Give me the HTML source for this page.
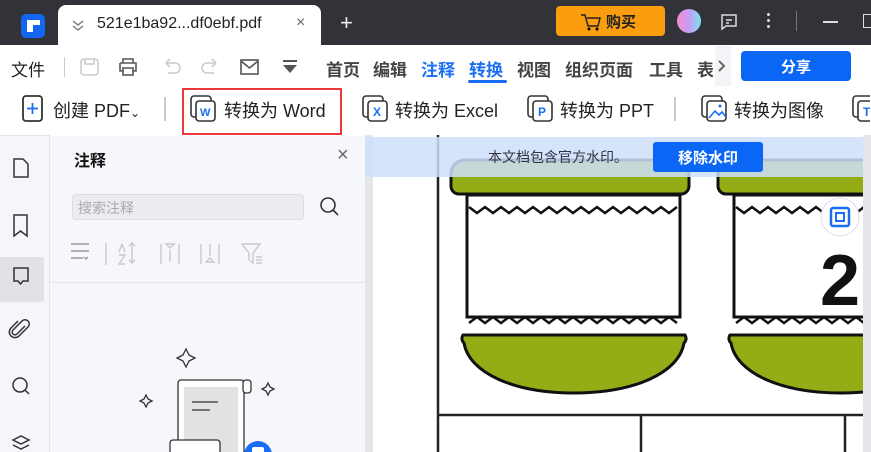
<!DOCTYPE html>
<html><head><meta charset="utf-8"><style>
*{margin:0;padding:0;box-sizing:border-box}
body{width:871px;height:452px;overflow:hidden;position:relative;background:#fff;font-family:"Liberation Sans","Noto Sans CJK SC",sans-serif;color:#222}
.a{position:absolute}
.t{white-space:nowrap}
.m{position:absolute;top:56px;font-size:17px;font-weight:bold;color:#444;white-space:nowrap}
</style></head><body>
<!-- title bar -->
<div class="a" style="left:0;top:0;width:871px;height:45px;background:#313338"></div>
<div class="a" style="top:14px;left:21px;width:24px;height:24px;background:#1266f1;border-radius:5px"></div>
<div class="a" style="left:27px;top:20px;width:13px;height:5px;background:#fff"></div>
<div class="a" style="left:27px;top:25px;width:6px;height:7px;background:#fff"></div>
<div class="a" style="left:58px;top:5px;width:263px;height:40px;background:#fff;border-radius:8px 8px 0 0"></div>
<svg class="a" style="left:71px;top:18px" width="14" height="14" fill="none" stroke="#777" stroke-width="1.4"><path d="M2 3l5 4 5-4M2 8l5 4 5-4"/></svg>
<div class="a t" style="left:97px;top:15px;font-size:16px;color:#222">521e1ba92...df0ebf.pdf</div>
<div class="a t" style="left:296px;top:14px;font-size:16px;color:#666">×</div>
<div class="a t" style="left:340px;top:10px;font-size:22px;color:#eee">+</div>
<div class="a" style="left:556px;top:6px;width:109px;height:30px;background:#fa9d0f;border-radius:4px"></div>
<svg class="a" style="left:580px;top:12px" width="22" height="20"><path d="M1 3h4l3 11h10l2-8H7" fill="none" stroke="#222" stroke-width="1.5"/><circle cx="9" cy="17" r="1.5"/><circle cx="17" cy="17" r="1.5"/></svg>
<div class="a t" style="left:606px;top:11px;font-size:15px;font-weight:bold;color:#222">购买</div>
<div class="a" style="left:677px;top:9px;width:24px;height:24px;border-radius:50%;background:linear-gradient(90deg,#f58bd0,#c69cf5,#7be4f0)"></div>
<svg class="a" style="left:720px;top:13px" width="18" height="18"><path d="M2 2h14v11H6l-4 3z" fill="none" stroke="#ddd" stroke-width="1.5"/><path d="M6 7h6M6 10h3" stroke="#ddd" stroke-width="1.5"/></svg>
<div class="a" style="left:767px;top:13px;width:3px;height:3px;background:#ddd;border-radius:50%;box-shadow:0 6px #ddd,0 12px #ddd"></div>
<div class="a" style="left:796px;top:11px;width:1px;height:20px;background:#777"></div>
<div class="a" style="left:823px;top:21px;width:15px;height:1.5px;background:#ddd"></div>
<div class="a" style="left:863px;top:14px;width:14px;height:14px;border:1.5px solid #ddd"></div>
<!-- menu row -->
<div class="a t" style="left:11px;top:56px;font-size:17px">文件</div>
<div class="a" style="left:64px;top:57px;width:1px;height:20px;background:#ccc"></div>
<svg class="a" style="left:80px;top:57px" width="220" height="20" fill="none" stroke-width="1.6">
<rect x="1" y="2" width="17" height="16" rx="3" stroke="#ccc"/><path d="M5 2v5h9V2" stroke="#ccc"/>
<path d="M43 6V2h10v4M40 6h16v8h-3M43 14h-3V6M43 11h10v7H43z" stroke="#555"/>
<path d="M86 6h9a5 5 0 010 10h-7M86 6l4-4M86 6l4 4" stroke="#ccc"/>
<path d="M136 6h-9a5 5 0 000 10h7M136 6l-4-4M136 6l-4 4" stroke="#ccc"/>
<rect x="161" y="3" width="17" height="14" stroke="#555"/><path d="M161 4l8.5 7 8.5-7" stroke="#555"/>
<path d="M203 4h14" stroke="#555" stroke-width="2"/><path d="M203 8h14l-7 8z" fill="#555" stroke="none"/>
</svg>
<div class="m" style="left:326px">首页</div>
<div class="m" style="left:373px">编辑</div>
<div class="m" style="left:421px;color:#1a6ef5">注释</div>
<div class="m" style="left:469px;color:#1a6ef5">转换</div>
<div class="m" style="left:517px">视图</div>
<div class="m" style="left:565px">组织页面</div>
<div class="m" style="left:649px">工具</div>
<div class="m" style="left:697px">表</div>
<div class="a" style="left:468px;top:80px;width:39px;height:3px;background:#1a6ef5;border-radius:2px"></div>
<div class="a" style="left:715px;top:46px;width:16px;height:40px;background:#f2f4f8"></div>
<svg class="a" style="left:716px;top:59px" width="12" height="14" fill="none" stroke="#666" stroke-width="2"><path d="M3 2l5 5-5 5"/></svg>
<div class="a" style="left:741px;top:51px;width:110px;height:30px;background:#0a66f5;border-radius:4px"></div>
<div class="a t" style="left:781px;top:56px;font-size:15px;color:#fff;font-weight:bold">分享</div>
<!-- ribbon -->
<svg class="a" style="left:22px;top:95px" width="22" height="28" fill="none" stroke-width="1.8"><rect x="1" y="1" width="19" height="25" rx="3" stroke="#333"/><path d="M10.5 8v11M5 13.5h11" stroke="#1a6ef5"/></svg>
<div class="a t" style="left:53px;top:97px;font-size:18px">创建 PDF<span style="font-size:12px">⌄</span></div>
<div class="a" style="left:164px;top:97px;width:1.5px;height:24px;background:#ccc"></div>
<div class="a" style="left:182px;top:88px;width:160px;height:47px;border:2px solid #e83a3a"></div>
<div class="a t" style="left:224px;top:97px;font-size:18px">转换为 Word</div>
<div class="a t" style="left:395px;top:97px;font-size:18px">转换为 Excel</div>
<div class="a t" style="left:560px;top:97px;font-size:18px">转换为 PPT</div>
<div class="a" style="left:674px;top:97px;width:1.5px;height:24px;background:#ccc"></div>
<div class="a t" style="left:734px;top:97px;font-size:18px">转换为图像</div>
<svg class="a" style="left:190px;top:94px" width="680" height="30" fill="none" stroke="#333" stroke-width="1.6">
<g><rect x="1" y="2" width="20" height="21" rx="3"/><rect x="6" y="7" width="19" height="20" rx="3" fill="#fff"/><text x="10" y="22" font-size="11" fill="#1a6ef5" stroke="none" font-weight="bold" font-family="Liberation Sans">W</text></g>
<g transform="translate(172,0)"><rect x="1" y="2" width="20" height="21" rx="3"/><rect x="6" y="7" width="19" height="20" rx="3" fill="#fff"/><text x="11" y="22" font-size="12" fill="#1a6ef5" stroke="none" font-weight="bold" font-family="Liberation Sans">X</text></g>
<g transform="translate(337,0)"><rect x="1" y="2" width="20" height="21" rx="3"/><rect x="6" y="7" width="19" height="20" rx="3" fill="#fff"/><text x="11" y="22" font-size="12" fill="#1a6ef5" stroke="none" font-weight="bold" font-family="Liberation Sans">P</text></g>
<g transform="translate(511,0)"><rect x="1" y="2" width="20" height="21" rx="3"/><rect x="6" y="7" width="19" height="20" rx="3" fill="#fff"/><path d="M8 24l6-7 4 4 3-3 4 5" stroke="#1a6ef5"/><circle cx="19" cy="12" r="1.5" fill="#1a6ef5" stroke="none"/></g>
<g transform="translate(662,0)"><rect x="1" y="2" width="20" height="21" rx="3"/><rect x="6" y="7" width="19" height="20" rx="3" fill="#fff"/><text x="11" y="22" font-size="12" fill="#1a6ef5" stroke="none" font-weight="bold" font-family="Liberation Sans">T</text></g>
</svg>
<!-- left strip -->
<div class="a" style="left:0;top:135px;width:50px;height:317px;background:#f5f6fa;border-right:1px solid #e3e5ea;border-top:1px solid #e3e5ea"></div>
<div class="a" style="left:0;top:257px;width:44px;height:45px;background:#e1e2e6;border-radius:0 3px 3px 0"></div>
<svg class="a" style="left:8px;top:155px" width="30" height="297" fill="none" stroke="#333" stroke-width="1.5">
<path d="M6 4h9l5 5v13H6z"/>
<path d="M6 60h13v21l-6.5-5-6.5 5z"/>
<path d="M6 113h14v13h-5l-2.5 3-2.5-3H6z"/>
<path d="M17 171l-8 8a2.5 2.5 0 01-4-4l9-9a4 4 0 016 6l-9 9a5.5 5.5 0 01-8-8l7-7"/>
<circle cx="12" cy="230" r="7"/><path d="M17 235l4 4"/>
<path d="M5 285l8-4 8 4-8 4z M5 290l8 4 8-4"/>
</svg>
<!-- panel -->
<div class="a" style="left:50px;top:136px;width:315px;height:316px;background:#f6f7fb"></div>
<div class="a t" style="left:74px;top:147px;font-size:16px;font-weight:bold;color:#111">注释</div>
<div class="a t" style="left:337px;top:144px;font-size:20px;color:#666">×</div>
<div class="a" style="left:72px;top:194px;width:232px;height:26px;background:#ebecf0;border:1px solid #dcdde2;border-radius:4px"></div>
<div class="a t" style="left:78px;top:198px;font-size:14px;color:#aaa">搜索注释</div>
<svg class="a" style="left:318px;top:195px" width="24" height="24" fill="none" stroke="#333" stroke-width="1.6"><circle cx="10" cy="10" r="7"/><path d="M15 15l5 5"/></svg>
<svg class="a" style="left:70px;top:240px" width="200" height="28" fill="none" stroke="#c8c9ce" stroke-width="1.4">
<path d="M1 4h18M1 11h18M1 18h12M14 17l2 2 2-2" stroke="#999"/><path d="M36 3v22"/>
<path d="M52 4l-3 8M52 4l3 8M49 15h6l-6 9h6M62 3v20M59 6l3-3 3 3M59 20l3 3 3-3"/>
<path d="M91 4v20M109 4v20M96 4h8l-4 4zM100 10v12"/><path d="M131 4v20M149 4v20M140 4v12M136 22h8l-4-4z"/>
<path d="M172 4h18l-7 9v10l-4-3v-7z M186 17h6M186 20h6M186 23h6"/>
</svg>
<div class="a" style="left:50px;top:282px;width:315px;height:1px;background:#e3e5ea"></div>
<svg class="a" style="left:130px;top:345px" width="160" height="107" fill="none" stroke="#333" stroke-width="1.3">
<path d="M56 4l3 6 6 3-6 3-3 6-3-6-6-3 6-3z"/>
<path d="M138 38l2 4 4 2-4 2-2 4-2-4-4-2 4-2z"/><path d="M16 50l2 4 4 2-4 2-2 4-2-4-4-2 4-2z"/>
<rect x="48" y="35" width="66" height="80" rx="3" fill="#fff"/><rect x="54" y="42" width="54" height="70" fill="#e2e2e4" stroke="none"/>
<rect x="113" y="35" width="8" height="13" rx="3" fill="#fff"/>
<path d="M62 57h26M62 65h18"/><rect x="40" y="95" width="50" height="20" rx="3" fill="#fff"/>
<circle cx="128" cy="110" r="14" fill="#1a6ef5" stroke="none"/><rect x="122" y="102" width="12" height="8" rx="2" fill="#fff" stroke="none"/>
</svg>
<!-- document area -->
<div class="a" style="left:365px;top:135px;width:506px;height:317px;background:#e4e6eb"></div>
<svg class="a" style="left:365px;top:135px" width="506" height="317">
<rect x="8" y="0" width="490" height="317" fill="#fff"/>
<path d="M73 0v317M73 280h425M276 280v37M480 280v37" stroke="#222" stroke-width="2.5" fill="none"/>
<g id="j">
<path d="M100 25h210a14 14 0 0114 14v12a8 8 0 01-8 8H94a8 8 0 01-8-8V39a14 14 0 0114-14z" fill="#94ad17" stroke="#111" stroke-width="3"/>
<rect x="102" y="60" width="213" height="122" fill="#fff" stroke="#111" stroke-width="3"/>
<path d="M104 72l8 6 8-6 8 6 8-6 8 6 8-6 8 6 8-6 8 6 8-6 8 6 8-6 8 6 8-6 8 6 8-6 8 6 8-6 8 6 8-6 8 6 8-6 8 6 8-6 8 6 8-6" stroke="#111" stroke-width="2.5" fill="none"/>
<path d="M104 188l8-6 8 6 8-6 8 6 8-6 8 6 8-6 8 6 8-6 8 6 8-6 8 6 8-6 8 6 8-6 8 6 8-6 8 6 8-6 8 6 8-6 8 6 8-6 8 6 8-6 8 6" stroke="#111" stroke-width="2.5" fill="none"/>
<path d="M98 200h222a6 6 0 01-1 8c-5 30-50 50-110 50s-105-20-110-50a6 6 0 01-1-8z" fill="#94ad17" stroke="#111" stroke-width="3"/>
</g>
<use href="#j" x="267"/>
<rect x="0" y="2" width="498" height="40" fill="#cfdffa" opacity="0.85"/>
<text x="123" y="27" font-size="14" fill="#334" font-family="Liberation Sans,Noto Sans CJK SC,sans-serif">本文档包含官方水印。</text>
<rect x="288" y="7" width="110" height="30" rx="3" fill="#0a66f5"/>
<text x="343" y="28" font-size="15" fill="#fff" font-weight="bold" text-anchor="middle" font-family="Liberation Sans,Noto Sans CJK SC,sans-serif">移除水印</text>
<text x="455" y="170" font-size="72" font-weight="bold" fill="#111" font-family="Liberation Sans">2</text>
<rect x="498" y="0" width="8" height="317" fill="#e4e6eb"/>
<circle cx="475" cy="82" r="19" fill="#fff" stroke="#dde" />
<rect x="466" y="73" width="18" height="18" rx="2" fill="none" stroke="#1a6ef5" stroke-width="2.5"/>
<rect x="471" y="78" width="8" height="8" fill="none" stroke="#1a6ef5" stroke-width="2"/>
</svg>
</body></html>
